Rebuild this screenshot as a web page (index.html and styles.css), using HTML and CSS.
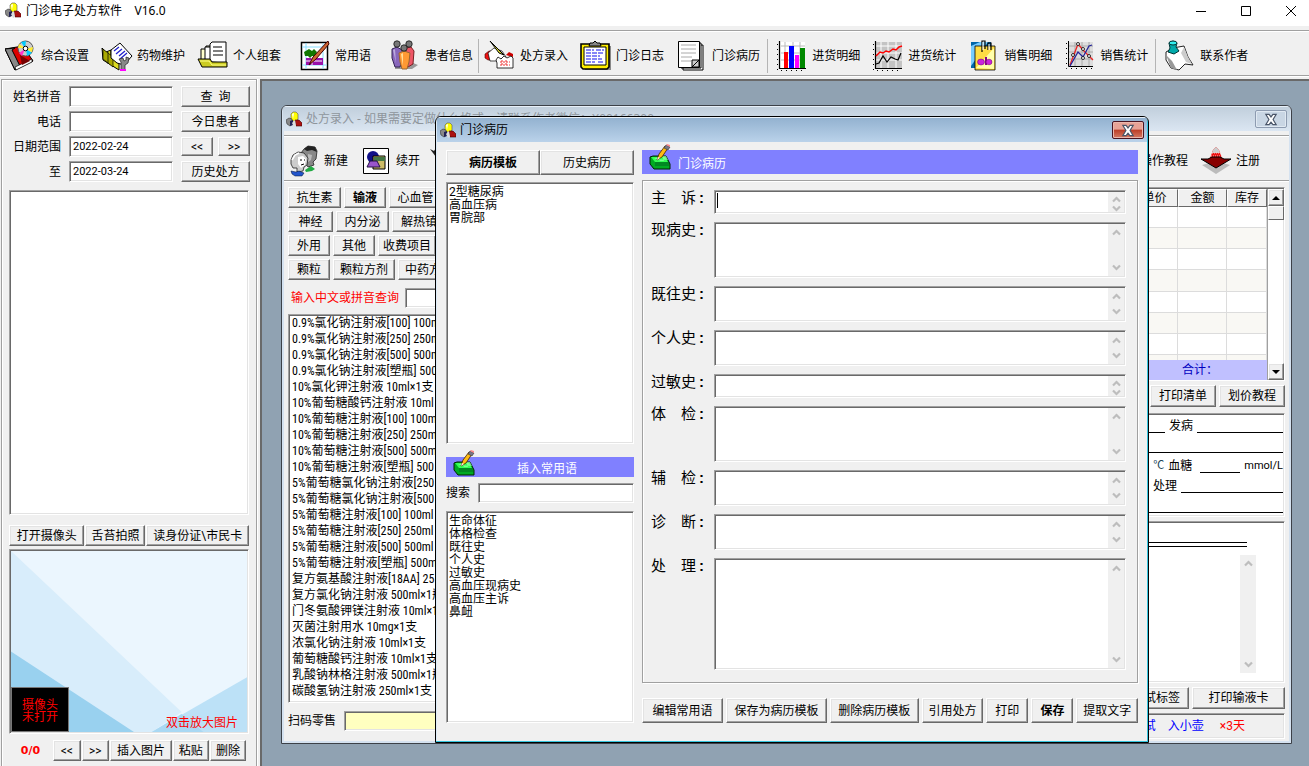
FILE: index.html
```html
<!DOCTYPE html>
<html lang="zh-CN">
<head>
<meta charset="utf-8">
<title>门诊电子处方软件 V16.0</title>
<link rel="stylesheet" href="styles.css">
</head>
<body>
<svg class="defs" aria-hidden="true">
  <symbol id="logo" viewBox="0 0 16 16">
    <path d="M5 9V3l2-2h3l2 2v5l-2 2H6z" fill="#ff0" stroke="#555" stroke-width=".6"/>
    <path d="M6 3l2-1-1 6z" fill="#fff"/>
    <path d="M0 9l3-2 3 1 1 5-3 2-3-2z" fill="#888" stroke="#333" stroke-width=".6"/>
    <path d="M4 10l3-1v5l-3 1z" fill="#225"/>
    <path d="M9 9h4l3 3v3H10z" fill="#a11" stroke="#400" stroke-width=".6"/>
    <path d="M6 12l3-3 1 6-2 1z" fill="#ddd"/>
  </symbol>
  <symbol id="pad" viewBox="0 0 22 26">
    <path d="M1 13l3-1h13l4 8v5H5l-4-5z" fill="#0a2" stroke="#020" />
    <path d="M2 13h14l3 5H6z" fill="#3f5"/>
    <path d="M6 19h14M6 21h14" stroke="#062"/>
    <path d="M5 15l4-2 2 4h4l-2-5 4 0 2 4" fill="#9fa" opacity=".7"/>
    <path d="M8 16l2-6 6-8 3 2-6 9z" fill="#fb1" stroke="#420" stroke-width=".8"/>
    <path d="M8 16l1-3 2 1z" fill="#fee"/>
    <path d="M15 4l2-3 4 2-2 3z" fill="#778" stroke="#222" stroke-width=".5"/>
    <path d="M17 1l1-1 3 1v2z" fill="#f88"/>
  </symbol>
  <symbol id="up" viewBox="0 0 9 7"><path d="M1 5.500L4.500 2L8 5.500" fill="none" stroke="#bdbdbd" stroke-width="2.200"/></symbol>
  <symbol id="down" viewBox="0 0 9 7"><path d="M1 1.500L4.500 5L8 1.500" fill="none" stroke="#bdbdbd" stroke-width="2.200"/></symbol>
  <symbol id="cross" viewBox="0 0 12 10"><path d="M2 1h2.500L6 3l1.500-2H10L7.600 5 10 9H7.500L6 7 4.500 9H2l2.400-4z" fill="#fff" stroke="#4a5568" stroke-width=".9"/></symbol>
</svg>

<header class="titlebar">
  <svg class="logo"><use href="#logo"/></svg>
  <h1>门诊电子处方软件 &nbsp;&nbsp; V16.0</h1>
  <div class="win-controls">
    <button aria-label="最小化"><svg viewBox="0 0 12 12"><path d="M1 6.500h10" stroke="#000"/></svg></button>
    <button aria-label="最大化"><svg viewBox="0 0 12 12"><path d="M1.500 1.500h9v9h-9z" fill="none" stroke="#000"/></svg></button>
    <button aria-label="关闭"><svg viewBox="0 0 12 12"><path d="M1 1l10 10M11 1L1 11" stroke="#000"/></svg></button>
  </div>
</header>

<nav class="toolbar">
  <div class="group">
    <button class="tool"><svg viewBox="0 0 32 32"><path d="M0 9l18-3 10 15-18 9z" fill="#d00" stroke="#000"/><path d="M0 9l10-1-3 2 8 16-5 4z" fill="#888" stroke="#000"/><path d="M10 27l17-8v3l-16 8z" fill="#fff" stroke="#000" stroke-width=".7"/><path d="M15 15l10 6-8 4z" fill="#700"/><circle cx="20.500" cy="8.500" r="7.500" fill="#ccc" stroke="#555"/><path d="M20 8l-4-6 5-1zM21 9l6 4-5 3z" fill="#0cf"/><path d="M20 8l-7 0 1-4zM21 9l7-2-1 5z" fill="#fe3"/><path d="M20 9l-6 4 3 3z" fill="#f3c"/><circle cx="20.500" cy="8.500" r="2.300" fill="#fff" stroke="#000"/></svg>综合设置</button>
    <button class="tool"><svg viewBox="0 0 32 32"><path d="M1 8l4 4 5-2v5l8 4v11L2 20z" fill="#dd2" stroke="#000"/><path d="M2 9v10l10 8V17zM7 12v12" fill="#aa0" stroke="#000" stroke-width=".7"/><path d="M10 10l9-7 12 13-8 9-7-2-6-5z" fill="#fff" stroke="#000"/><path d="M13 11l5-4M15 14l6-5M18 16l6-5M19 19l7-6" stroke="#22c" stroke-width="1.300"/><path d="M20 22l-2-3 4-1 1 3 2-1v-3l3 1-1 5-3 2v5h-4v-5z" fill="#888" stroke="#222" stroke-width=".7"/><path d="M19 30h6" stroke="#f0f" stroke-width="2"/></svg>药物维护</button>
    <button class="tool"><svg viewBox="0 0 32 32"><path d="M4 21V9h5V6h7" fill="#ffc" stroke="#000"/><path d="M8 20V7h7v14" fill="#fff" stroke="#000"/><path d="M13 22V4l2-2h14v21z" fill="#fff" stroke="#000"/><path d="M16 7h9M16 11h10M16 15h10" stroke="#000" stroke-width="1.200"/><path d="M1 19h12l2 3h15v5H5z" fill="#cc2" stroke="#000"/><path d="M3 21h9l3 4h14" stroke="#ff8" fill="none"/></svg>个人组套</button>
    <button class="tool tool-short"><svg viewBox="0 0 32 32"><path d="M2.500 2.500h26v27h-26z" fill="#fff" stroke="#000" stroke-width="1.500"/><path d="M7 3v26M3 7h25M3 25h25M24 3v26" stroke="#8df"/><path d="M7 18h17v7H7z" fill="#91a"/><path d="M7 21h16M13 18v7" stroke="#fff"/><path d="M5 12l5-3 3 2 2-2 3 3-2 4h-3l-2 2-2-2-3 0z" fill="#170"/><path d="M29 1l1 3-13 15-7 6 4-8z" fill="#c63" stroke="#400"/></svg>常用语</button>
    <button class="tool"><svg viewBox="0 0 32 32"><path d="M6 29h17l6-4-5-2-18 3z" fill="#999"/><path d="M3 9l5-2 5 3 1 6-3 11H6L3 18z" fill="#86b" stroke="#325"/><path d="M17 8l5-1 3 4-1 13-5 3-3-3z" fill="#e56" stroke="#722"/><path d="M10 13l5-2 6 2-1 9-2 7h-5l-2-7z" fill="#f93" stroke="#963"/><path d="M12 14l2-1v13z" fill="#fd9"/><path d="M4 10l2-1 1 14z" fill="#bad"/><g fill="#777" stroke="#111" stroke-width=".8"><circle cx="8" cy="4" r="3.200"/><circle cx="20" cy="4" r="3.200"/><circle cx="15" cy="8" r="3.200"/></g></svg>患者信息</button>
  </div>
  <i class="sep"></i>
  <div class="group">
    <button class="tool"><svg viewBox="0 0 32 32"><path d="M1 14l4-3h5l-3 6 4 3H4l-3-2z" fill="#e11" stroke="#400" stroke-width=".6"/><path d="M4 13l6-5 8 3 4 6-10 4H6z" fill="#fff" stroke="#000" stroke-width=".7"/><path d="M22 15l3-3 4 2v3z" fill="#c00"/><path d="M12 20l2-3 3 2 3-3 3 2 4-2 2 2v10H13v-5z" fill="#fff" stroke="#000" stroke-width=".8"/><path d="M16 22h10M16 25h10M18 20v6M22 20v6" stroke="#e33" stroke-dasharray="2 1"/><path d="M6 1l14 14-5-2z" fill="#dd3" stroke="#000"/></svg>处方录入</button>
    <button class="tool"><svg viewBox="0 0 32 32"><path d="M5 6h26v24H5z" fill="#888"/><path d="M1 4h28v23l-2 2H3l-2-2z" fill="#fe0" stroke="#000" stroke-width="1.600"/><path d="M4 7h22v18H4z" fill="#fff" stroke="#000"/><path d="M6 10h8M16 10h8M6 13h18M6 16h14M6 19h16M6 22h9M18 22h6" stroke="#11e" stroke-width="1.200" stroke-dasharray="5 1"/><path d="M9 6l1-3h3l2-2 2 2h3l1 3z" fill="#888" stroke="#000"/></svg>门诊日志</button>
    <button class="tool"><svg viewBox="0 0 32 32"><g fill="#fff" stroke="#000"><path d="M7 5h20v25H7z"/><path d="M5 3h20v25H5z"/><path d="M2.500 1.500h21v26h-21z"/></g><path d="M5 5h15M5 9h15M5 13h15M5 17h11M5 21h10" stroke="#aaa"/><path d="M16 20h7v7h-7zM16 27l7-7" fill="#ccc" stroke="#000"/></svg>门诊病历</button>
  </div>
  <i class="sep sep-wide"></i>
  <div class="group">
    <button class="tool"><svg viewBox="0 0 32 32"><path d="M5 2h24v26H5z" fill="#fff"/><path d="M5 6h24M5 13h24M5 20h24M9 2v26M17 2v26M24 2v26" stroke="#bbb"/><path d="M3.500 1v27.500H30" fill="none" stroke="#000" stroke-width="1.200"/><path d="M1.500 4v26.500h28" fill="none" stroke="#000" stroke-dasharray="1 4"/><path d="M8 12h4v16H8z" fill="#f00"/><path d="M13 6h5v22h-5z" fill="#00f"/><path d="M19 15h4v13h-4z" fill="#f0f"/><path d="M24 8h5v20h-5z" fill="#080"/></svg>进货明细</button>
    <button class="tool"><svg viewBox="0 0 32 32"><path d="M4 2h26v26H4z" fill="#c4c4c4"/><path d="M4 6h26M4 13h26M4 20h26M9 2v26M16 2v26M24 2v26" stroke="#fff"/><path d="M3.500 1v27.500H30" fill="none" stroke="#000" stroke-width="1.200"/><path d="M1.500 4v26.500h28" fill="none" stroke="#000" stroke-dasharray="1 4"/><path d="M4 16l4-4 3 1 3-2 3 1 4-3 3 1 3-3 3-1" fill="none" stroke="#f00" stroke-width="1.500"/><path d="M4 24l3-1 4-7 4 6 4-5 4 2 3 1 3-7" fill="none" stroke="#000" stroke-width="1.200"/></svg>进货统计</button>
    <button class="tool"><svg viewBox="0 0 32 32"><path d="M3 2h20v26H3z" fill="#06a"/><path d="M3 6l9-4h8L3 26z" fill="#7cf"/><path d="M7 6h20v24H7z" fill="#fd4" stroke="#000" stroke-width=".8"/><path d="M8 28L26 8v21z" fill="#ffa"/><path d="M14 12V1h3v8M20 10V3h3v7" fill="none" stroke="#000" stroke-width="1.200"/><path d="M15 2v8M21 4v6" stroke="#fff"/><ellipse cx="13" cy="22" rx="3.500" ry="3" fill="#c2d" stroke="#606" stroke-width=".5"/><path d="M18 17v8" stroke="#808" stroke-width="2"/><ellipse cx="21" cy="22" rx="3" ry="2.800" fill="#c2d" stroke="#606" stroke-width=".5"/></svg>销售明细</button>
    <button class="tool"><svg viewBox="0 0 32 32"><path d="M5 2h24v24H5z" fill="#ddd"/><path d="M5 6h24M5 12h24M5 19h24M11 2v24M18 2v24M25 2v24" stroke="#aaa"/><path d="M4.500 1v25.500H29" fill="none" stroke="#000"/><path d="M2.500 3v25.500h27" fill="none" stroke="#000" stroke-dasharray="1 4"/><path d="M6 25L14 4l5 6 7 7 3 3" fill="none" stroke="#e22" stroke-width="1.300"/><path d="M6 26l8-14 5 5 6-11 3-1" fill="none" stroke="#229" stroke-width="1.300"/><g fill="#fff" stroke="#000" stroke-width=".8"><circle cx="14" cy="4" r="1.500"/><circle cx="9" cy="15" r="1.500"/><circle cx="19" cy="9" r="1.500"/><circle cx="25" cy="16" r="1.500"/><circle cx="19" cy="18" r="1.500"/></g></svg>销售统计</button>
  </div>
  <i class="sep sep-wide"></i>
  <button class="tool"><svg viewBox="0 0 32 32"><path d="M2 12l7-4 11-2 4 11 5 8-8-1-6 6-8-2-5-8z" fill="#fff" stroke="#222"/><path d="M20 7l4 10 4 7-6-2-5-9z" fill="#ccc"/><path d="M2 15l5 13 6 2-5-9z" fill="#999"/><path d="M5 3l4-2 4 2-1 4 3 4-5 3-6-2 2-4z" fill="#0aa" stroke="#033"/><ellipse cx="9" cy="3" rx="4" ry="2" fill="#3ee" stroke="#033"/></svg>联系作者</button>
</nav>

<main class="workspace">
  <aside class="side">
    <form class="search">
      <label for="name">姓名拼音</label><input id="name" type="text"><button type="button">查 &nbsp;询</button>
      <label for="tel">电话</label><input id="tel" type="text"><button type="button">今日患者</button>
      <label for="from">日期范围</label><input id="from" type="text" value="2022-02-24">
      <div class="pair"><button type="button">&lt;&lt;</button><button type="button">&gt;&gt;</button></div>
      <label for="to">至</label><input id="to" type="text" value="2022-03-24"><button type="button">历史处方</button>
    </form>
    <div class="well patients"></div>
    <div class="camera-bar"><button>打开摄像头</button><button>舌苔拍照</button><button>读身份证\市民卡</button></div>
    <div class="well photo">
      <svg viewBox="0 0 238 182" preserveAspectRatio="none"><path d="M0 0h238v182H0z" fill="#ebf6fe"/><path d="M0 0L172 162 142 182H0z" fill="#d8edfb"/><path d="M0 101L124 182H0z" fill="#99d1ef"/><path d="M238 127v55h-96z" fill="#bce1f7"/><path d="M172 164l-30 18h52z" fill="#a9d8f3"/></svg>
      <p class="no-camera">摄像头<br>未打开</p>
      <p class="photo-hint">双击放大图片</p>
    </div>
    <div class="photo-bar"><b>0/0</b><button>&lt;&lt;</button><button>&gt;&gt;</button><button>插入图片</button><button>粘贴</button><button>删除</button></div>
  </aside>

  <section class="desktop">
    <section class="window rx">
      <header class="caption"><svg class="logo"><use href="#logo"/></svg><h2>处方录入 - 如果需要定做什么格式，请联系作者微信：X00166300</h2><button class="close" aria-label="关闭"><svg><use href="#cross"/></svg></button></header>
      <div class="rx-tools">
        <button class="tool new"><svg viewBox="0 0 32 32"><path d="M13 8l3-4 4-3 7 1 2 4-1 8-3 3 1 3-6 2-4-6z" fill="#888" stroke="#222" stroke-width=".8"/><path d="M16 4l4-3 7 1 2 5-5-2-5 1z" fill="#222"/><path d="M20 9l4 1-1 5-3 2z" fill="#bbb"/><path d="M3 15l2-5 5-3 6 1 4 5-1 7-3 2-1 4-6 1 0-4-4 0-2-4z" fill="#ccc" stroke="#222" stroke-width=".8"/><path d="M10 12l5-1 3 3-1 6-4 3-3-4z" fill="#fff"/><path d="M12 15h2M16 15h1M13 20l3-1" stroke="#000"/><path d="M4 15l3-5 4-2" fill="none" stroke="#fff" stroke-width="1.500"/><path d="M3 26l5 1 3-1 5 2-2 3H7l-3-2z" fill="#25c" stroke="#013" stroke-width=".5"/><path d="M17 25l6-4 4 3-3 2-6 1z" fill="#2a4"/></svg>新建</button>
        <button class="tool"><svg viewBox="0 0 32 32"><path d="M3.500 3.500h25v25h-25z" fill="#fff" stroke="#000"/><circle cx="13" cy="12" r="6" fill="#118"/><path d="M13 11h12v13H13z" fill="#cb6" stroke="#000"/><path d="M14 12h11v4H14z" fill="#474"/><path d="M7 22l3-6h7l3 6z" fill="#95c" stroke="#214"/></svg>续开</button>
        <button class="tool" aria-label="工具"><svg viewBox="0 0 32 32"><path d="M2 4l4 2 2-3v9l-3-4z" fill="#222"/></svg></button>
        <button class="tool push">操作教程</button>
        <button class="tool"><svg viewBox="0 0 32 32"><path d="M2 20l14 9 14-9-14-4z" fill="#bbb"/><path d="M9 16L13 5l3-3 3 3 4 11z" fill="#e11"/><path d="M13 5l3-3 3 3 1 3h-8z" fill="#ccc"/><path d="M12 8h9M11 11h11" stroke="#fcc" stroke-dasharray="1 1"/><path d="M1 14h7l4-2h8l4 2h7l-15 9z" fill="#800" stroke="#000"/></svg>注册</button>
      </div>
      <div class="rx-body">
        <div class="drugs">
          <div class="cats"><button class="w5">抗生素</button><button class="w4 bold">输液</button><button class="w5">心血管</button></div>
          <div class="cats"><button class="w45">神经</button><button class="w5">内分泌</button><button class="w66">解热镇痛</button></div>
          <div class="cats"><button class="w4">外用</button><button class="w4">其他</button><button class="w58">收费项目</button></div>
          <div class="cats"><button class="w4">颗粒</button><button class="w6">颗粒方剂</button><button class="w6">中药方剂</button></div>
          <div class="drug-search"><label for="drug">输入中文或拼音查询</label><input id="drug" type="text"></div>
          <ul class="well drug-list">
            <li>0.9%氯化钠注射液[100] 100m</li><li>0.9%氯化钠注射液[250] 250m</li><li>0.9%氯化钠注射液[500] 500m</li><li>0.9%氯化钠注射液[塑瓶] 500</li><li>10%氯化钾注射液 10ml×1支</li><li>10%葡萄糖酸钙注射液 10ml</li><li>10%葡萄糖注射液[100] 100m</li><li>10%葡萄糖注射液[250] 250m</li><li>10%葡萄糖注射液[500] 500m</li><li>10%葡萄糖注射液[塑瓶] 500</li><li>5%葡萄糖氯化钠注射液[250</li><li>5%葡萄糖氯化钠注射液[500</li><li>5%葡萄糖注射液[100] 100ml</li><li>5%葡萄糖注射液[250] 250ml</li><li>5%葡萄糖注射液[500] 500ml</li><li>5%葡萄糖注射液[塑瓶] 500m</li><li>复方氨基酸注射液[18AA] 25</li><li>复方氯化钠注射液 500ml×1瓶</li><li>门冬氨酸钾镁注射液 10ml×1</li><li>灭菌注射用水 10mg×1支</li><li>浓氯化钠注射液 10ml×1支</li><li>葡萄糖酸钙注射液 10ml×1支</li><li>乳酸钠林格注射液 500ml×1瓶</li><li>碳酸氢钠注射液 250ml×1支</li>
          </ul>
          <div class="scan"><label for="scan">扫码零售</label><input id="scan" type="text"></div>
        </div>
        <div class="order">
          <div class="well grid-box">
            <div class="grid-main">
              <table>
                <colgroup><col><col class="c-price"><col class="c-sum"><col class="c-stock"></colgroup>
                <thead><tr><th></th><th>单价</th><th>金额</th><th>库存</th></tr></thead>
                <tbody><tr><td></td><td></td><td></td><td></td></tr><tr><td></td><td></td><td></td><td></td></tr><tr><td></td><td></td><td></td><td></td></tr><tr><td></td><td></td><td></td><td></td></tr><tr><td></td><td></td><td></td><td></td></tr><tr><td></td><td></td><td></td><td></td></tr><tr><td></td><td></td><td></td><td></td></tr><tr><td></td><td></td><td></td><td></td></tr></tbody>
              </table>
              <p class="total">合计：</p>
            </div>
            <div class="classic-bar"><button aria-label="向上"><svg viewBox="0 0 8 4"><path d="M0 4l4-4 4 4z"/></svg></button><i class="thumb"></i><button class="push-down" aria-label="向下"><svg viewBox="0 0 8 4"><path d="M0 0l4 4 4-4z"/></svg></button></div>
          </div>
          <div class="right-row"><button>打印清单</button><button>划价教程</button></div>
          <div class="well notes">
            <div class="line"><i></i><label for="onset">发病</label><input id="onset" class="w86" type="text"></div>
            <div class="line"><i></i></div>
            <div class="line"><i></i><span class="unit">℃</span><label for="sugar">血糖</label><input id="sugar" class="w40" type="text"><span>mmol/L</span></div>
            <div class="line"><i></i><label for="treat">处理</label><input id="treat" class="w102" type="text"></div>
            <div class="line"><i></i></div>
          </div>
          <div class="well preview">
            <hr>
            <div class="flat-bar"><svg><use href="#up"/></svg><svg><use href="#down"/></svg></div>
          </div>
          <div class="right-row labels"><button>打印皮试标签</button><button class="wide">打印输液卡</button></div>
          <div class="status"><span>皮试</span><span>入小壶</span><em>×3天</em></div>
        </div>
      </div>
    </section>

    <section class="window emr" role="dialog" aria-label="门诊病历">
      <header class="caption"><svg class="logo"><use href="#logo"/></svg><h2>门诊病历</h2><button class="close" aria-label="关闭"><svg><use href="#cross"/></svg></button></header>
      <div class="emr-body">
        <div class="emr-left">
          <div class="tabs"><button class="bold">病历模板</button><button>历史病历</button></div>
          <ul class="well templates"><li>2型糖尿病</li><li>高血压病</li><li>胃脘部</li></ul>
          <div class="band center"><svg><use href="#pad"/></svg><h3>插入常用语</h3></div>
          <div class="phrase-search"><label for="phrase">搜索</label><input id="phrase" type="text"></div>
          <ul class="well phrases"><li>生命体征</li><li>体格检查</li><li>既往史</li><li>个人史</li><li>过敏史</li><li>高血压现病史</li><li>高血压主诉</li><li>鼻衄</li></ul>
        </div>
        <div class="emr-right">
          <div class="band tall"><svg><use href="#pad"/></svg><h3>门诊病历</h3></div>
          <form class="fields">
            <label for="f1">主　诉<b>:</b></label><div class="well area h1"><textarea id="f1"></textarea><span class="caret"></span><div class="flat-bar"><svg><use href="#up"/></svg><svg><use href="#down"/></svg></div></div>
            <label for="f2">现病史<b>:</b></label><div class="well area h3"><textarea id="f2"></textarea><div class="flat-bar"><svg><use href="#up"/></svg><svg><use href="#down"/></svg></div></div>
            <label for="f3">既往史<b>:</b></label><div class="well area h2"><textarea id="f3"></textarea><div class="flat-bar"><svg><use href="#up"/></svg><svg><use href="#down"/></svg></div></div>
            <label for="f4">个人史<b>:</b></label><div class="well area h2"><textarea id="f4"></textarea><div class="flat-bar"><svg><use href="#up"/></svg><svg><use href="#down"/></svg></div></div>
            <label for="f5">过敏史<b>:</b></label><div class="well area h1"><textarea id="f5"></textarea><div class="flat-bar"><svg><use href="#up"/></svg><svg><use href="#down"/></svg></div></div>
            <label for="f6">体　检<b>:</b></label><div class="well area h3"><textarea id="f6"></textarea><div class="flat-bar"><svg><use href="#up"/></svg><svg><use href="#down"/></svg></div></div>
            <label for="f7">辅　检<b>:</b></label><div class="well area h2"><textarea id="f7"></textarea><div class="flat-bar"><svg><use href="#up"/></svg><svg><use href="#down"/></svg></div></div>
            <label for="f8">诊　断<b>:</b></label><div class="well area h2"><textarea id="f8"></textarea><div class="flat-bar"><svg><use href="#up"/></svg><svg><use href="#down"/></svg></div></div>
            <label for="f9">处　理<b>:</b></label><div class="well area h4"><textarea id="f9"></textarea><div class="flat-bar"><svg><use href="#up"/></svg><svg><use href="#down"/></svg></div></div>
          </form>
          <div class="actions"><button class="a80">编辑常用语</button><button class="a100">保存为病历模板</button><button class="a88">删除病历模板</button><button class="a60">引用处方</button><button class="a40">打印</button><button class="a40 bold">保存</button><button class="a60">提取文字</button></div>
        </div>
      </div>
    </section>
  </section>
</main>
</body>
</html>
```
FILE: styles.css
```css
* { box-sizing: border-box; }
html { background: #f0f0f0; }
body {
  margin: 0;
  height: 100vh;
  display: flex;
  flex-direction: column;
  overflow: hidden;
  font: 12px/16px "Roboto", "Noto Sans CJK SC", sans-serif;
  color: #000;
}
h1, h2, h3, p, ul { margin: 0; padding: 0; font-size: 12px; font-weight: 400; }
ul { list-style: none; }
svg { display: block; flex: none; }
.defs { display: none; }
.logo { width: 16px; height: 16px; }
.bold { font-weight: 700; }

button {
  font: inherit;
  color: inherit;
  height: 21px;
  padding: 0;
  white-space: nowrap;
  background: #f0f0f0;
  border: 1px solid;
  border-color: #fff #696969 #696969 #fff;
  box-shadow: inset -1px -1px #a0a0a0, inset 1px 1px #e3e3e3;
  display: flex;
  align-items: center;
  justify-content: center;
}
button.bold { font-weight: 700; }
input, .well {
  background: #fff;
  border: 1px solid;
  border-color: #a0a0a0 #fff #fff #a0a0a0;
  box-shadow: inset 1px 1px #696969, inset -1px -1px #e3e3e3;
}
input {
  font: inherit;
  font-size: 11px;
  height: 20px;
  min-width: 0;
  padding: 0 3px;
  border-radius: 0;
}

/* main title bar */
.titlebar { flex: none; height: 26px; padding: 0 0 0 5px; display: flex; align-items: flex-start; gap: 5px; background: #fff; }
.titlebar .logo { margin-top: 2px; }
.titlebar h1 { line-height: 22px; font-family: "Noto Sans", "Noto Sans CJK SC", sans-serif; }
.win-controls { margin-left: auto; display: flex; gap: 9px; }
.win-controls button { width: 36px; height: 22px; border: 0; box-shadow: none; background: none; }
.win-controls svg { width: 12px; height: 12px; }

/* toolbar */
.toolbar { flex: none; height: 46px; margin-top: 4px; padding: 5px 4px 0 5px; display: flex; align-items: center; border-top: 1px solid #a0a0a0; border-bottom: 1px solid #a0a0a0; box-shadow: inset 0 1px #fff, 0 1px #fff; }
.group { display: flex; gap: 12px; }
.tool { height: 32px; gap: 4px; border: 0; box-shadow: none; background: none; }
.tool svg { width: 32px; height: 32px; }
.tool-short { margin: 0 6px; }
.sep { width: 1px; height: 34px; margin: 0 5px; background: #b4b4b4; }
.sep-wide { margin: 0 8px 0 7px; }

/* workspace */
.workspace { flex: 1; min-height: 0; margin-top: 3px; display: flex; }
.side { flex: none; width: 256px; margin: 0 3px 0 1px; padding: 6px 7px 5px; display: flex; flex-direction: column; border: 1px solid #a0a0a0; border-bottom: 0; box-shadow: inset 1px 1px #fff, 1px 0 #fff; }
.search { display: grid; grid-template-columns: 52px 104px 69px; column-gap: 8px; grid-auto-rows: 21px; row-gap: 4px; align-items: center; }
.search label { text-align: right; white-space: nowrap; }
.search input { height: 21px; }
.pair { display: flex; gap: 5px; }
.pair button { flex: 1; height: 19px; }
.patients { flex: 1; margin-top: 8px; }
.camera-bar { display: flex; margin-top: 10px; gap: 1px; }
.camera-bar button { flex: 60 1 0; }
.camera-bar button:first-child { flex-grow: 76; }
.camera-bar button:last-child { flex-grow: 104; }
.photo { position: relative; height: 185px; margin-top: 3px; padding: 1px; }
.photo svg { width: 100%; height: 100%; }
.no-camera { position: absolute; left: 1px; bottom: 1px; width: 58px; height: 45px; padding: 11px 0 0; line-height: 12px; text-align: center; background: #000; border: 1px solid #777; color: #f00; }
.photo-hint { position: absolute; right: 10px; bottom: 2px; color: #f00; }
.photo-bar { display: flex; align-items: center; margin-top: 6px; padding-right: 3px; gap: 1px; }
.photo-bar b { width: 43px; text-align: center; color: #f00; font-family: "DejaVu Sans", sans-serif; font-size: 11px; }
.photo-bar button { flex: 27 1 0; }
.photo-bar button:nth-of-type(3) { flex-grow: 63; }
.photo-bar button:nth-of-type(n+4) { flex-grow: 36; }

.desktop { flex: 1; position: relative; overflow: hidden; background: #90a2b2; border: solid #696969; border-width: 2px 0 0 2px; }

/* child windows */
.window { position: absolute; display: flex; flex-direction: column; overflow: hidden; background: #f0f0f0; border: 1px solid #3c4148; border-radius: 6px 6px 0 0; }
.rx { left: 19px; right: 17px; top: 24px; bottom: 22px; box-shadow: inset 0 0 0 2px #d5e2f0; }
.emr { left: 173px; right: 160px; top: 35px; bottom: 23px; border-color: #000; box-shadow: inset -1px -1px #35c5de, inset 1px 1px #dcebf8; }
.caption { flex: none; height: 25px; margin: 0 1px; padding: 0 3px; display: flex; align-items: center; gap: 4px; border-top: 1px solid #e8f0f8; background: linear-gradient(#c1cfdc, #dbe6f2); }
.emr .caption { background: linear-gradient(#93b2d0, #bad2ea); }
.caption h2 { flex: 1; min-width: 0; overflow: hidden; white-space: nowrap; color: #8e959c; font-family: "Noto Sans", "Noto Sans CJK SC", sans-serif; }
.emr .caption h2 { color: #000; }
.close { width: 32px; height: 18px; border: 1px solid #8d9bb0; border-radius: 2px; background: #c9d6e4; box-shadow: inset 0 0 0 1px #e0e9f2; }
.close svg { width: 16px; height: 13px; }
.emr .close { border-color: #4a1420; background: linear-gradient(#e8a396 45%, #bb3e27 50%, #d47a64); box-shadow: inset 0 0 0 1px #eab7ad; }

/* prescription window */
.rx-tools { flex: none; height: 46px; margin: 4px 2px 0; padding: 5px 29px 0 4px; display: flex; align-items: center; gap: 8px; border-top: 1px solid #a0a0a0; border-bottom: 1px solid #a0a0a0; box-shadow: inset 0 1px #fff, 0 1px #fff; }
.rx-tools .new { margin-right: 4px; }
.rx-tools .push { margin: 0 4px 0 auto; }
.rx-body { flex: 1; min-height: 0; padding: 6px 6px 4px; display: grid; grid-template-columns: 300px 1fr; gap: 8px; }
.drugs, .order { min-width: 0; min-height: 0; display: flex; flex-direction: column; }
.cats { display: flex; gap: 3px; margin-bottom: 3px; }
.w4 { width: 42px; }
.w45 { width: 45px; }
.w5 { width: 53px; }
.w58 { width: 58px; }
.w6 { width: 62px; }
.w66 { width: 66px; }
.drug-search { display: flex; align-items: center; gap: 6px; margin: 5px 0 6px; padding-left: 3px; color: #f00; }
.drug-search input, .scan input { flex: 1; }
.drug-list { flex: 1; min-height: 0; overflow: hidden; padding: 0 3px; white-space: nowrap; font-family: "Roboto Condensed", "Roboto", "Noto Sans CJK SC", sans-serif; }
.scan { display: flex; align-items: center; gap: 8px; margin: 8px 0; }
.scan input { background: #ffffc0; }

.order { gap: 4px; }
.grid-box { flex: 1 1 194px; min-height: 0; display: flex; padding: 1px 0 0 1px; }
.grid-main { flex: 1; min-width: 0; display: flex; flex-direction: column; overflow: hidden; }
table { flex: 1; width: 100%; min-height: 0; table-layout: fixed; border-collapse: separate; border-spacing: 0; display: table; height: 187px; margin-bottom: -16px; }
.c-price { width: 47px; }
.c-sum { width: 49px; }
.c-stock { width: 40px; }
th { height: 18px; padding: 0; font-weight: 400; line-height: 16px; background: #f0f0f0; border: 1px solid; border-color: #fff #696969 #696969 #fff; }
td { height: 21px; padding: 0; border: solid #dcdcdc; border-width: 0 1px 1px 0; }
tbody tr:nth-child(even) { background: #f9f8f4; }
.total { flex: none; position: relative; height: 20px; padding: 2px 49px 0 0; text-align: right; background: #c0c0ff; color: #0000c0; }
.classic-bar { width: 17px; display: flex; flex-direction: column; border-left: 1px solid #a0a0a0; }
.classic-bar button { width: 16px; height: 17px; }
.classic-bar svg { width: 8px; height: 4px; }
.thumb { height: 14px; background: #f0f0f0; border: 1px solid; border-color: #fff #696969 #696969 #fff; }
.push-down { margin-top: auto; }
.right-row { flex: none; display: flex; justify-content: flex-end; gap: 3px; }
.right-row button { width: 66px; height: 22px; }
.right-row .wide { width: 93px; }
.right-row.labels button:first-child { width: 90px; }
.notes { flex: none; height: 104px; margin-top: 2px; padding-right: 1px; }
.line { height: 20px; display: flex; align-items: flex-end; gap: 4px; }
.line:first-child { height: 19px; }
.line i { flex: 1; border-bottom: 1px solid #000; }
.line label, .line span { line-height: 14px; }
.line span { font-size: 11px; }
.line .unit { color: #245; }
.line input { height: 18px; border: 0; border-bottom: 1px solid #000; box-shadow: none; background: none; }
.w40 { width: 40px; margin-left: 4px; }
.w86 { width: 86px; }
.w102 { width: 102px; }
.preview { flex: 0 0 162px; padding: 20px 28px 9px 0; display: flex; flex-direction: column; }
.preview hr { width: calc(100% - 9px); height: 5px; margin: 0 auto 8px 0; border: solid #000; border-width: 1px 0; }
.preview .flat-bar { margin-left: auto; flex: 1; }
.status { flex: none; height: 26px; padding: 0 39px 0 0; display: flex; align-items: center; justify-content: flex-end; gap: 12px; color: #00f; border: 1px solid; border-color: #a0a0a0 #fff #fff #a0a0a0; box-shadow: inset 0 1px #696969, inset -1px -1px #e3e3e3; }
.status em { font-style: normal; color: #f00; margin-left: 4px; }

.flat-bar { flex: none; width: 16px; display: flex; flex-direction: column; align-items: center; justify-content: space-between; padding: 5px 0; background: #f0f0f0; }
.flat-bar svg { width: 9px; height: 7px; }

/* medical record window */
.emr-body { flex: 1; min-height: 0; display: flex; gap: 8px; padding: 8px 10px 19px; }
.emr-left { flex: none; width: 188px; display: flex; flex-direction: column; }
.emr-right { flex: 1; min-width: 0; display: flex; flex-direction: column; }
.tabs { display: flex; }
.tabs button { flex: 1; height: 25px; }
.templates { flex: 5 1 0; min-height: 0; margin-top: 7px; }
.phrases { flex: 4 1 0; min-height: 0; margin-top: 8px; }
.templates, .phrases { padding: 3px 2px; line-height: 13px; }
.band { position: relative; height: 20px; background: #8080ff; color: #fff; }
.band svg { position: absolute; left: 7px; bottom: 1px; width: 22px; height: 26px; }
.band h3 { padding-left: 36px; line-height: 24px; }
.band.tall { height: 24px; }
.band.tall h3 { line-height: 28px; }
.band.tall svg { bottom: 4px; }
.band.center { margin: 13px 0 6px; }
.band.center h3 { padding-left: 14px; text-align: center; }
.phrase-search { display: flex; align-items: center; gap: 8px; }
.phrase-search input { flex: 1; }
.fields { flex: 1; margin-top: 6px; padding: 9px 11px 10px 8px; display: grid; grid-template-columns: 55px 1fr; column-gap: 8px; row-gap: 8px; align-content: start; border: 1px solid #a0a0a0; box-shadow: inset 1px 1px #fff, 1px 1px #fff; }
.fields label { font-size: 15px; line-height: 16px; white-space: nowrap; }
.fields b { margin-left: 3px; font-family: "Liberation Sans", sans-serif; }
.area { position: relative; display: flex; padding: 1px; }
.area textarea { flex: 1; min-width: 0; height: 100%; padding: 2px; border: 0; outline: 0; resize: none; overflow: hidden; background: none; font: inherit; }
.caret { position: absolute; left: 2px; top: 2px; width: 1px; height: 15px; background: #000; }
.h1 { height: 24px; }
.h2 { height: 36px; }
.h3 { height: 56px; }
.h4 { height: 112px; }
.h1 .flat-bar { padding: 4px 0 0; }
.actions { display: flex; gap: 3px; margin-top: 15px; }
.actions button { height: 25px; }
.a40 { flex: 41 1 0; }
.a60 { flex: 61 1 0; }
.a80 { flex: 81 1 0; }
.a88 { flex: 89 1 0; }
.a100 { flex: 101 1 0; }
```
